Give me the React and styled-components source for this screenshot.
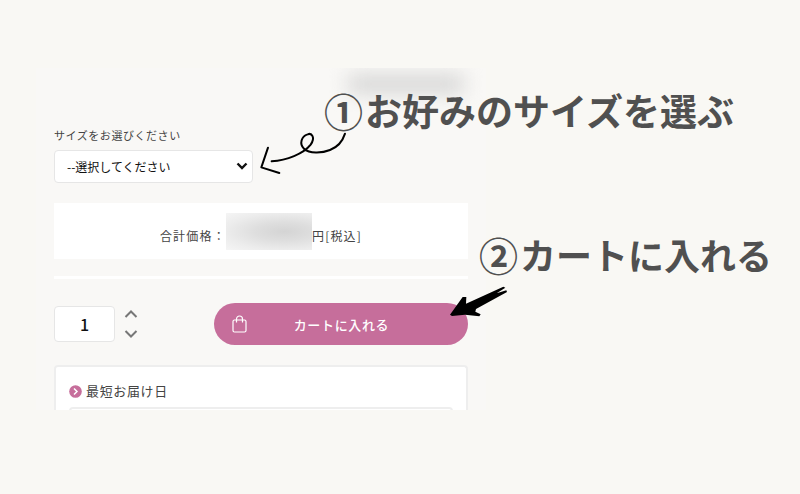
import React, { useState } from "react";
import styled, { createGlobalStyle } from "styled-components";

const GlobalStyle = createGlobalStyle`
    * {
        box-sizing: border-box;
    }
    body {
        margin: 0;
        background-color: #f9f8f4;
        color: #444;
        font-family: "Noto Sans CJK JP", "Noto Sans", sans-serif;
    }
    button, input, select {
        font-family: inherit;
    }
`;

const Page = styled.main`
    position: relative;
    padding: 68px 36px;
    overflow: hidden;
`;

const Shop = styled.section`
    max-width: 450px;
    padding: 57px 18px 0;
    background-color: #f9f8f6;
`;

const Label = styled.label`
    display: block;
    font-size: 11px;
    line-height: 20px;
    letter-spacing: 0.05em;
`;

const SelectWrap = styled.div`
    position: relative;
    width: 199px;
    margin-top: 5px;
    svg {
        position: absolute;
        right: 5px;
        top: 12px;
        pointer-events: none;
    }
`;

const Select = styled.select`
    display: block;
    appearance: none;
    width: 100%;
    height: 33px;
    padding: 0 24px 0 12px;
    border: 1px solid #e6e6e6;
    border-radius: 4px;
    background-color: #fff;
    color: #111;
    font-size: 12px;
`;

const Price = styled.div`
    display: flex;
    justify-content: center;
    align-items: center;
    height: 56px;
    margin-top: 20px;
    background-color: #fff;
    font-size: 12px;
    letter-spacing: 0.1em;
    white-space: nowrap;
    span {
        padding-top: 8px;
    }
`;

const Mosaic = styled.div`
    width: 86px;
    height: 37px;
    background: radial-gradient(ellipse at 68% 50%, #d4d4d4 0%, #dedede 35%, #ececec 70%, #f5f5f5 100%);
`;

const Divider = styled.hr`
    height: 3px;
    margin: 17px 0 0;
    border: 0;
    background-color: #fff;
`;

const BuyRow = styled.div`
    display: flex;
    align-items: center;
    margin-top: 24px;
`;

const Quantity = styled.input`
    width: 61px;
    height: 36px;
    padding: 0;
    border: 1px solid #e6e6e6;
    border-radius: 4px;
    background-color: #fff;
    color: #111;
    font-size: 16px;
    font-weight: 500;
    text-align: center;
`;

const Stepper = styled.div`
    display: flex;
    flex-direction: column;
    gap: 12px;
    margin-left: 9px;
`;

const StepButton = styled.button`
    display: flex;
    padding: 0;
    border: 0;
    background: none;
    cursor: pointer;
`;

const CartButton = styled.button`
    display: flex;
    align-items: center;
    width: 254px;
    height: 42px;
    margin-left: auto;
    padding: 0 18px;
    border: 0;
    border-radius: 21px;
    background-color: #c66e9b;
    color: #fff;
    font-size: 13px;
    font-weight: 500;
    letter-spacing: 0.05em;
    cursor: pointer;
    span {
        flex: 1;
        padding-right: 14px;
    }
`;

const Delivery = styled.div`
    height: 45px;
    margin-top: 20px;
    padding: 14px 13px 0;
    overflow: hidden;
    border: 2px solid #eee;
    border-bottom: 0;
    border-radius: 4px 4px 0 0;
    background-color: #fff;
`;

const DeliveryTitle = styled.div`
    display: flex;
    align-items: center;
    gap: 4px;
    font-size: 13px;
    line-height: 20px;
    letter-spacing: 0.05em;
`;

const DeliveryBox = styled.div`
    height: 24px;
    margin-top: 6px;
    border: 2px solid #eee;
    border-radius: 4px;
`;

const Smudge = styled.div`
    position: absolute;
    top: 68px;
    left: 320px;
    width: 170px;
    height: 44px;
    overflow: hidden;
    &::before {
        content: "";
        position: absolute;
        top: 8px;
        left: 28px;
        width: 116px;
        height: 16px;
        background-color: #d0d0d0;
        filter: blur(10px);
    }
`;

const Note = styled.p`
    position: absolute;
    top: ${(props) => props.$top};
    left: ${(props) => props.$left};
    display: flex;
    align-items: center;
    gap: 2px;
    margin: 0;
    color: #505050;
    font-size: ${(props) => props.$size};
    font-weight: 700;
    line-height: 48px;
    white-space: nowrap;
`;

const NoteMark = styled.span`
    font-size: 39px;
`;

const Arrow = styled.svg`
    position: absolute;
    top: ${(props) => props.$top};
    left: ${(props) => props.$left};
    pointer-events: none;
`;

const Chevron = ({ up }) => (
    <svg width="14" height="8" viewBox="0 0 14 8" fill="none" stroke="#777" strokeWidth="2">
        <path d={up ? "M1.5 7L7 1.5L12.5 7" : "M1.5 1L7 6.5L12.5 1"} />
    </svg>
);

const BagIcon = () => (
    <svg width="15" height="18" viewBox="0 0 15 18" fill="none" stroke="#fff" strokeWidth="1.2">
        <rect x="1" y="5" width="13" height="12" rx="1.5" />
        <path d="M4.5 7.5V4a3 3 0 0 1 6 0V7.5" />
    </svg>
);

const App = () => {
    const [count, setCount] = useState(1);

    return (
        <>
            <GlobalStyle />
            <Page>
                <Shop>
                    <Label htmlFor="size">サイズをお選びください</Label>
                    <SelectWrap>
                        <Select id="size">
                            <option>--選択してください</option>
                        </Select>
                        <svg width="12" height="9" viewBox="0 0 12 9" fill="none" stroke="#111" strokeWidth="2.4">
                            <path d="M1.5 1.5L6 6L10.5 1.5" />
                        </svg>
                    </SelectWrap>
                    <Price>
                        <span>合計価格：</span>
                        <Mosaic />
                        <span>円[税込]</span>
                    </Price>
                    <Divider />
                    <BuyRow>
                        <Quantity
                            aria-label="数量"
                            value={count}
                            onChange={(e) => setCount(Number(e.target.value) || 1)}
                        />
                        <Stepper>
                            <StepButton aria-label="増やす" onClick={() => setCount(count + 1)}>
                                <Chevron up />
                            </StepButton>
                            <StepButton aria-label="減らす" onClick={() => setCount(Math.max(1, count - 1))}>
                                <Chevron />
                            </StepButton>
                        </Stepper>
                        <CartButton>
                            <BagIcon />
                            <span>カートに入れる</span>
                        </CartButton>
                    </BuyRow>
                    <Delivery>
                        <DeliveryTitle>
                            <svg width="13" height="13" viewBox="0 0 13 13">
                                <circle cx="6.5" cy="6.5" r="6.3" fill="#c66e9b" />
                                <path d="M5 3.5L8 6.5L5 9.5" fill="none" stroke="#fff" strokeWidth="1.5" />
                            </svg>
                            最短お届け日
                        </DeliveryTitle>
                        <DeliveryBox />
                    </Delivery>
                </Shop>
                <Smudge />
                <Note $top="86px" $left="324px" $size="37px">
                    <NoteMark>①</NoteMark>
                    <span>お好みのサイズを選ぶ</span>
                </Note>
                <Note $top="230px" $left="479px" $size="36px">
                    <NoteMark>②</NoteMark>
                    <span>カートに入れる</span>
                </Note>
                <Arrow
                    $top="130px"
                    $left="260px"
                    width="88"
                    height="46"
                    viewBox="30 210 264 138"
                    fill="none"
                    stroke="#000"
                    strokeWidth="6"
                    strokeLinecap="round"
                    strokeLinejoin="round"
                >
                    <path d="M54 263L34 322L88 339" />
                    <path d="M65 304C110 301 160 282 182 254C197 232 185 218 173 223C154 229 147 252 162 266C178 281 215 280 240 270C264 261 278 243 285 221" />
                </Arrow>
                <Arrow $top="285px" $left="449px" width="60" height="34" viewBox="57 195 180 102">
                    <path d="M60 284L98 231L109 231L108 251L220 200L226 203L200 220L229 211L231 216L138 267L136 275L152 283L148 289L105 284L66 288Z" />
                </Arrow>
            </Page>
        </>
    );
};

export default App;
